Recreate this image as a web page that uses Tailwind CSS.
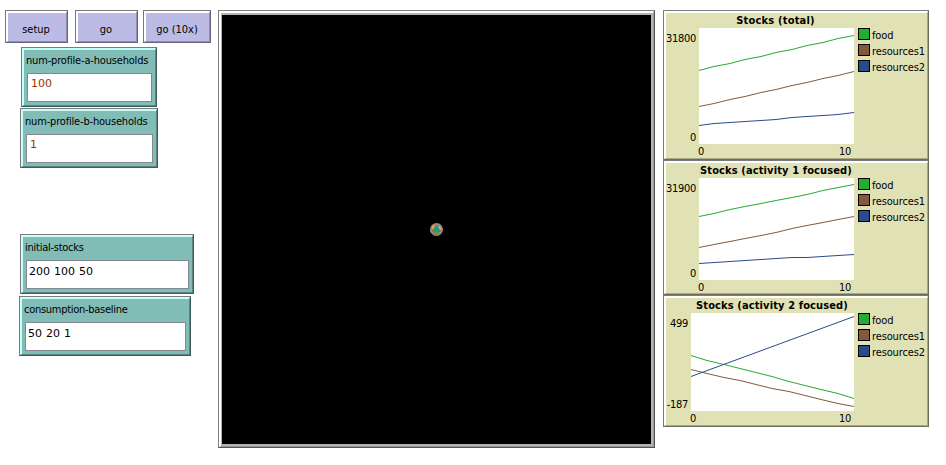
<!DOCTYPE html>
<html lang="en">
<head>
<meta charset="utf-8">
<title>Household stocks model</title>
<script src="https://cdn.jsdelivr.net/npm/@tailwindcss/browser@4"></script>
</head>
<body class="flex h-[465px] w-[946px] items-start overflow-hidden bg-white pt-[10px] font-['DejaVu_Sans_Condensed','DejaVu_Sans',sans-serif] text-[11px] leading-[14px] text-black [font-stretch:condensed]">

<!-- Controls -->
<aside class="w-[218px] shrink-0">
  <div class="flex pl-[5px]">
    <button class="h-[33px] w-[63px] border border-[#777] border-r-[#66657d] border-b-[#66657d]"><span class="flex h-full items-center justify-center border-2 border-white border-r-[#8f8eae] border-b-[#8f8eae] border-r border-b bg-[#bcbbe5] pt-[6px] pr-[2px]">setup</span></button>
    <button class="ml-[7px] h-[33px] w-[63px] border border-[#777] border-r-[#66657d] border-b-[#66657d]"><span class="flex h-full items-center justify-center border-2 border-white border-r-[#8f8eae] border-b-[#8f8eae] border-r border-b bg-[#bcbbe5] pt-[6px] pr-[2px]">go</span></button>
    <button class="ml-[5px] h-[33px] w-[68px] border border-[#777] border-r-[#66657d] border-b-[#66657d]"><span class="flex h-full items-center justify-center border-2 border-white border-r-[#8f8eae] border-b-[#8f8eae] border-r border-b bg-[#bcbbe5] pt-[6px] pr-[1px]">go (10x)</span></button>
  </div>

  <div class="mt-[4px] ml-[21px] h-[60px] w-[136px] border border-[#7c7c7c] border-r-[#3f5c59] border-b-[#3f5c59]">
    <div class="h-full border-2 border-[#c8fffa] border-r border-b border-r-[#5c8581] border-b-[#5c8581] bg-[#82bcb6] pt-[4px] pl-[2px]">
      <div class="whitespace-nowrap tracking-[-0.18px]">num-profile-a-households</div>
      <div class="mt-[5px] ml-[1px] h-[29px] w-[125px] border border-[#808890] bg-white pt-[3px] pl-[3px] font-['DejaVu_Sans',sans-serif] [font-stretch:normal] text-[#963700]">100</div>
    </div>
  </div>
  <div class="mt-[1px] ml-[20px] h-[60px] w-[138px] border border-[#7c7c7c] border-r-[#3f5c59] border-b-[#3f5c59]">
    <div class="h-full border-2 border-[#c8fffa] border-r border-b border-r-[#5c8581] border-b-[#5c8581] bg-[#82bcb6] pt-[4px] pl-[2px]">
      <div class="whitespace-nowrap tracking-[-0.18px]">num-profile-b-households</div>
      <div class="mt-[5px] ml-[1px] h-[29px] w-[127px] border border-[#808890] bg-white pt-[3px] pl-[3px] font-['DejaVu_Sans',sans-serif] [font-stretch:normal] text-[#963700]">1</div>
    </div>
  </div>
  <div class="mt-[66px] ml-[20px] h-[60px] w-[174px] border border-[#7c7c7c] border-r-[#3f5c59] border-b-[#3f5c59]">
    <div class="h-full border-2 border-[#c8fffa] border-r border-b border-r-[#5c8581] border-b-[#5c8581] bg-[#82bcb6] pt-[4px] pl-[2px]">
      <div class="whitespace-nowrap tracking-[-0.25px]">initial-stocks</div>
      <div class="mt-[5px] ml-[1px] h-[29px] w-[163px] border border-[#808890] bg-white pt-[4px] pl-[2px] font-['DejaVu_Sans',sans-serif] [font-stretch:normal] [word-spacing:0.5px]">200 100 50</div>
    </div>
  </div>
  <div class="mt-[2px] ml-[19px] h-[60px] w-[172px] border border-[#7c7c7c] border-r-[#3f5c59] border-b-[#3f5c59]">
    <div class="h-full border-2 border-[#c8fffa] border-r border-b border-r-[#5c8581] border-b-[#5c8581] bg-[#82bcb6] pt-[4px] pl-[2px]">
      <div class="whitespace-nowrap tracking-[-0.28px]">consumption-baseline</div>
      <div class="mt-[5px] ml-[1px] h-[29px] w-[161px] border border-[#808890] bg-white pt-[4px] pl-[2px] font-['DejaVu_Sans',sans-serif] [font-stretch:normal] [word-spacing:0.5px]">50 20 1</div>
    </div>
  </div>
</aside>

<!-- World view -->
<main class="h-[438px] w-[437px] shrink-0 border border-[#808080] border-r-[#555] border-b-[#555]">
  <div class="h-full border-t-2 border-l-2 border-r border-b border-white border-r-[#999] border-b-[#999]">
    <div class="flex h-full items-center justify-center border-t-2 border-r-2 border-b-2 border-l border-[#b4b4b4] bg-black">
      <svg width="13" height="13" viewBox="0.5 0.5 13 13">
        <circle cx="7" cy="7" r="6.5" fill="#a98272"/>
        <path d="M2 4l2-2 1 1-2 3z" fill="#d76a70"/>
        <path d="M9 1l3 3-1 1-3-3z" fill="#8c8a9c"/>
        <path d="M3 6l1-3" stroke="#f1df30"/>
        <path d="M10 4l1 3" stroke="#f1df30"/>
        <path d="M6 3h2l1 3 3 3-3 1H4L2 9l3-3z" fill="#1d9f78"/>
        <path d="M5 10.500h3v3H5z" fill="#dd5b12"/>
        <path d="M8 10.500h2v2H8z" fill="#42b045"/>
        <path d="M1 7h1v3H1z" fill="#8d9690"/>
      </svg>
    </div>
  </div>
</main>

<!-- Plots -->
<section class="ml-[8px] w-[266px] shrink-0">
  <article class="h-[150px] border border-[#7a7a7a] border-r-[#6e6e58] border-b-[#6e6e58]">
    <div class="flex h-full border-2 border-white border-r border-b border-r-[#a7a884] border-b-[#a7a884] bg-[#e0e1b5]">
      <div class="flex w-[33px] flex-col items-end justify-between pt-[19px] pr-[3px] pb-[13px] tracking-[-0.3px]"><span>31800</span><span>0</span></div>
      <div class="w-[155px]">
        <h2 class="h-[15px] text-center font-bold tracking-[0.2px] whitespace-nowrap pt-px pr-[2px]">Stocks (total)</h2>
        <svg class="block bg-white" width="155" height="116" fill="none">
          <path stroke="#22ac31" d="M0 42.5L15 38.5L31 35.5L46 31.5L62 28.5L77 24.5L93 21.5L108 17.5L124 14.5L139 10.5L155 7.5"/>
          <path stroke="#825a3b" d="M0 78.5L15 75.5L31 71.5L46 68.5L62 64.5L77 61.5L93 57.5L108 54.5L124 50.5L139 47.5L155 43.5"/>
          <path stroke="#284b8c" d="M0 97.5L15 95.5L31 94.5L46 93.5L62 92.5L77 91.5L93 89.5L108 88.5L124 87.5L139 86.5L155 84.5"/>
        </svg>
        <div class="-ml-[1px] flex justify-between pt-px pr-[3px] tracking-[-0.3px]"><span>0</span><span>10</span></div>
      </div>
      <ul class="ml-[4px] pt-[15px] tracking-[-0.13px]">
        <li class="flex h-[16px]"><i class="mr-[2px] h-[12px] w-[12px] border border-black bg-[#22ac31]"></i><span class="pt-px">food</span></li>
        <li class="flex h-[16px]"><i class="mr-[2px] h-[12px] w-[12px] border border-black bg-[#825a3b]"></i><span class="pt-px">resources1</span></li>
        <li class="flex h-[16px]"><i class="mr-[2px] h-[12px] w-[12px] border border-black bg-[#284b8c]"></i><span class="pt-px">resources2</span></li>
      </ul>
    </div>
  </article>

  <article class="h-[135px] border border-[#7a7a7a] border-r-[#6e6e58] border-b-[#6e6e58]">
    <div class="flex h-full border-2 border-white border-r border-b border-r-[#a7a884] border-b-[#a7a884] bg-[#e0e1b5]">
      <div class="flex w-[33px] flex-col items-end justify-between pt-[19px] pr-[3px] pb-[12px] tracking-[-0.3px]"><span>31900</span><span>0</span></div>
      <div class="w-[155px]">
        <h2 class="h-[15px] text-center font-bold tracking-[0.12px] whitespace-nowrap pt-px pr-[1px]">Stocks (activity 1 focused)</h2>
        <svg class="block bg-white" width="155" height="102" fill="none">
          <path stroke="#22ac31" d="M0 38.5L15 35.5L31 31.5L46 28.5L62 25.5L77 22.5L93 19.5L108 16.5L124 12.5L139 9.5L155 6.5"/>
          <path stroke="#825a3b" d="M0 69.5L15 66.5L31 63.5L46 60.5L62 57.5L77 54.5L93 50.5L108 47.5L124 44.5L139 41.5L155 38.5"/>
          <path stroke="#284b8c" d="M0 85.5L31 83.5L62 81.5L93 79.5L108 79.5L139 77.5L155 76.5"/>
        </svg>
        <div class="-ml-[1px] flex justify-between pt-px pr-[3px] tracking-[-0.3px]"><span>0</span><span>10</span></div>
      </div>
      <ul class="ml-[4px] pt-[15px] tracking-[-0.13px]">
        <li class="flex h-[16px]"><i class="mr-[2px] h-[12px] w-[12px] border border-black bg-[#22ac31]"></i><span class="pt-px">food</span></li>
        <li class="flex h-[16px]"><i class="mr-[2px] h-[12px] w-[12px] border border-black bg-[#825a3b]"></i><span class="pt-px">resources1</span></li>
        <li class="flex h-[16px]"><i class="mr-[2px] h-[12px] w-[12px] border border-black bg-[#284b8c]"></i><span class="pt-px">resources2</span></li>
      </ul>
    </div>
  </article>

  <article class="h-[132px] border border-[#7a7a7a] border-r-[#6e6e58] border-b-[#6e6e58]">
    <div class="flex h-full border-2 border-white border-r border-b border-r-[#a7a884] border-b-[#a7a884] bg-[#e0e1b5]">
      <div class="flex w-[25px] flex-col items-end justify-between pt-[19px] pr-[3px] pb-[13px] tracking-[-0.3px]"><span>499</span><span>-187</span></div>
      <div class="w-[163px]">
        <h2 class="h-[15px] text-center font-bold tracking-[0.12px] whitespace-nowrap pt-px pr-[1px]">Stocks (activity 2 focused)</h2>
        <svg class="block bg-white" width="163" height="98" fill="none">
          <path stroke="#22ac31" d="M0 42.5L16 47.5L33 51.5L49 55.5L65 59.5L81 63.5L98 68.5L114 72.5L130 76.5L147 80.5L163 85.5"/>
          <path stroke="#825a3b" d="M0 56.5L16 60.5L33 64.5L49 67.5L65 71.5L81 75.5L98 78.5L114 82.5L130 86.5L147 90.5L163 93.5"/>
          <path stroke="#284b8c" d="M0 63.5L163 3.5"/>
        </svg>
        <div class="-ml-[1px] flex justify-between pt-px pr-[3px] tracking-[-0.3px]"><span>0</span><span>10</span></div>
      </div>
      <ul class="ml-[4px] pt-[15px] tracking-[-0.13px]">
        <li class="flex h-[16px]"><i class="mr-[2px] h-[12px] w-[12px] border border-black bg-[#22ac31]"></i><span class="pt-px">food</span></li>
        <li class="flex h-[16px]"><i class="mr-[2px] h-[12px] w-[12px] border border-black bg-[#825a3b]"></i><span class="pt-px">resources1</span></li>
        <li class="flex h-[16px]"><i class="mr-[2px] h-[12px] w-[12px] border border-black bg-[#284b8c]"></i><span class="pt-px">resources2</span></li>
      </ul>
    </div>
  </article>
</section>
</body>
</html>
